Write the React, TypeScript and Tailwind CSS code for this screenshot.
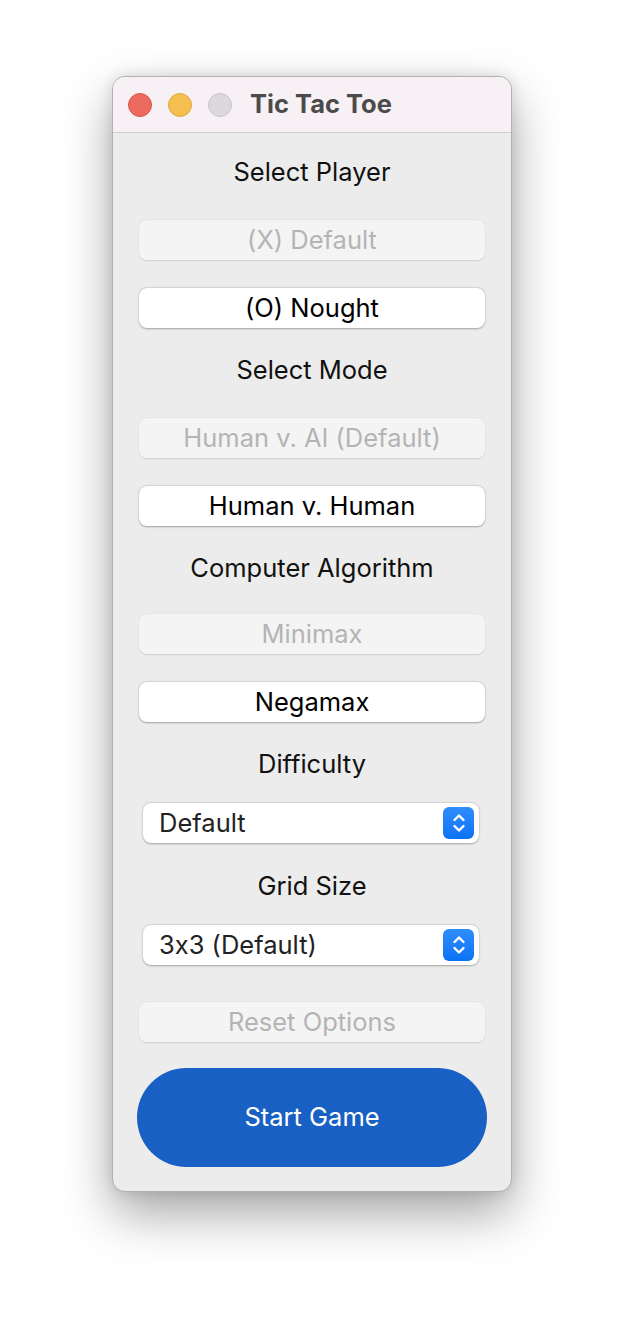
import React from "react";

const font = { fontFamily: "Inter, 'Noto Sans', sans-serif" };

function Label({ children, className = "" }: { children: React.ReactNode; className?: string }) {
  return (
    <div className={`h-[24px] leading-[24px] text-center text-[25.5px] text-[#111] ${className}`}>{children}</div>
  );
}

function Btn({ children, disabled, className = "" }: { children: React.ReactNode; disabled?: boolean; className?: string }) {
  return (
    <div
      className={`mx-[26px] h-[40px] rounded-[8px] flex items-center justify-center text-[25.5px] leading-[40px] ${
        disabled
          ? "bg-[#f4f4f4] text-[#b4b4b4] shadow-[0_0.5px_1.5px_rgba(0,0,0,0.12)]"
          : "bg-white text-black shadow-[0_0.5px_2px_rgba(0,0,0,0.3),0_0_0_0.5px_rgba(0,0,0,0.05)]"
      } ${className}`}
    >
      {children}
    </div>
  );
}

function Select({ value, className = "" }: { value: string; className?: string }) {
  return (
    <div
      className={`ml-[30px] mr-[32px] h-[40px] rounded-[8px] bg-white shadow-[0_0.5px_2px_rgba(0,0,0,0.3),0_0_0_0.5px_rgba(0,0,0,0.05)] flex items-center pl-[16px] pr-[5px] ${className}`}
    >
      <span className="flex-1 text-[25.5px] leading-[40px] text-[#222]">{value}</span>
      <div className="w-[31px] h-[32px] rounded-[6px] bg-gradient-to-b from-[#2f8dfc] to-[#0a72f5] flex items-center justify-center">
        <svg width="16" height="24" viewBox="0 0 16 24" fill="none">
          <path d="M3.5 9 L8 4.5 L12.5 9" stroke="white" strokeWidth="2.4" strokeLinecap="round" strokeLinejoin="round" />
          <path d="M3.5 15 L8 19.5 L12.5 15" stroke="white" strokeWidth="2.4" strokeLinecap="round" strokeLinejoin="round" />
        </svg>
      </div>
    </div>
  );
}

export default function App() {
  return (
    <div className="min-h-[1340px] bg-white flex justify-center pt-[76px] [font-feature-settings:'calt'_0]" style={font}>
      <div className="w-[400px] h-[1116px] rounded-[13px] overflow-hidden bg-[#ececec] border border-[#b0b0b0] shadow-[0_22px_50px_rgba(0,0,0,0.35),0_0_14px_rgba(0,0,0,0.12)] flex flex-col">
        <div className="h-[56px] shrink-0 bg-[#f7f1f5] border-b border-[#cfcfcf] flex items-center pl-[15px]">
          <div className="flex gap-[16px]">
            <span className="w-[24px] h-[24px] rounded-full bg-[#ec6a5e] border border-[#d6574c]" />
            <span className="w-[24px] h-[24px] rounded-full bg-[#f5bf4f] border border-[#dca93c]" />
            <span className="w-[24px] h-[24px] rounded-full bg-[#dcd8dc] border border-[#c9c5c9]" />
          </div>
          <span className="ml-[18px] text-[25.5px] font-bold text-[#4b4b4b]">Tic Tac Toe</span>
        </div>
        <div className="flex flex-col pt-[27px]">
          <Label>Select Player</Label>
          <Btn disabled className="mt-[36px]">(X) Default</Btn>
          <Btn className="mt-[28px]">(O) Nought</Btn>
          <Label className="mt-[30px]">Select Mode</Label>
          <Btn disabled className="mt-[36px]">Human v. AI (Default)</Btn>
          <Btn className="mt-[28px]">Human v. Human</Btn>
          <Label className="mt-[30px]">Computer Algorithm</Label>
          <Btn disabled className="mt-[34px]">Minimax</Btn>
          <Btn className="mt-[28px]">Negamax</Btn>
          <Label className="mt-[30px]">Difficulty</Label>
          <Select value="Default" className="mt-[27px]" />
          <Label className="mt-[31px]">Grid Size</Label>
          <Select value="3x3 (Default)" className="mt-[27px]" />
          <Btn disabled className="mt-[37px]">Reset Options</Btn>
          <div className="mx-[24px] mt-[26px] h-[99px] rounded-full bg-[#1860c4] flex items-center justify-center text-white text-[25.5px]">
            Start Game
          </div>
        </div>
      </div>
    </div>
  );
}
